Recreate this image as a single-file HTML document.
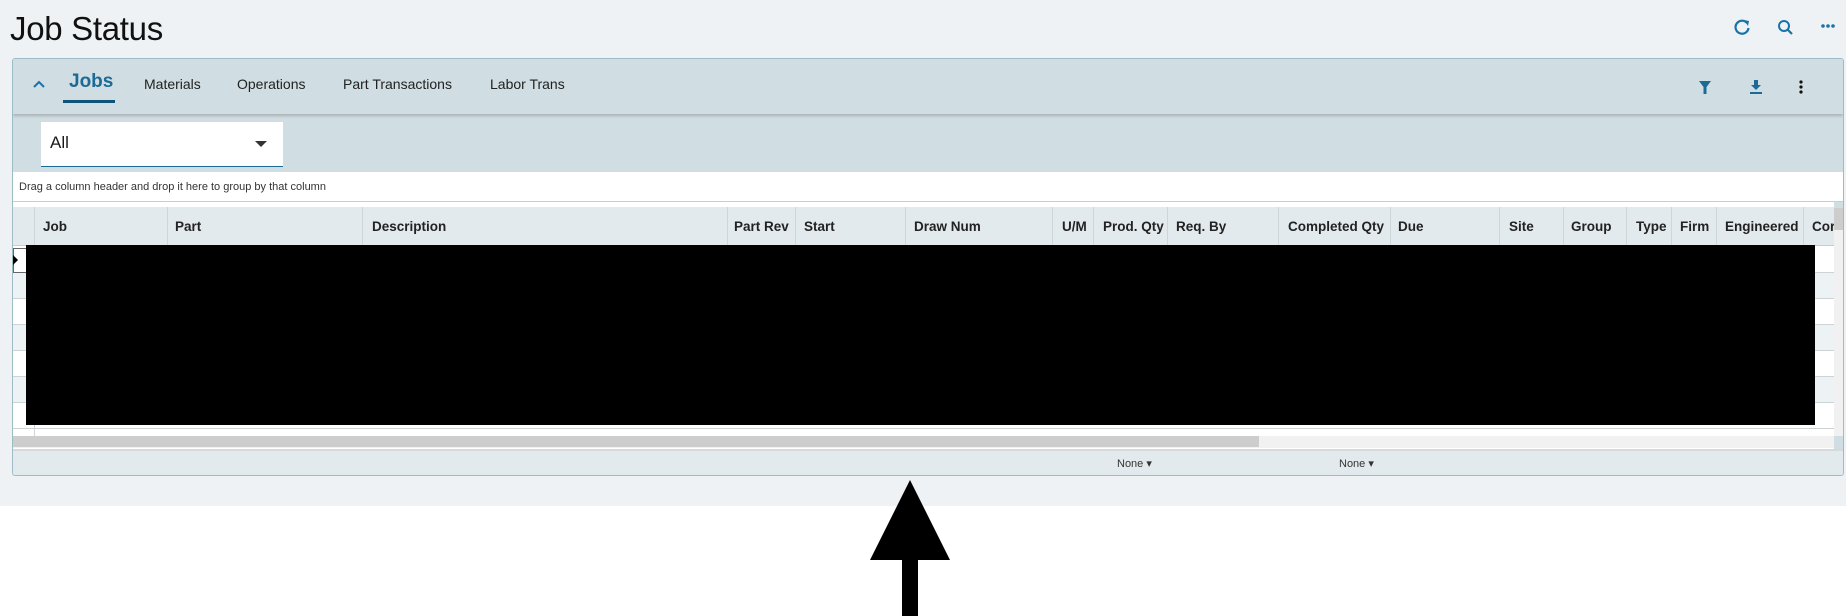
<!DOCTYPE html>
<html><head><meta charset="utf-8"><style>
*{box-sizing:border-box;margin:0;padding:0}
body{width:1846px;height:616px;background:#fff;position:relative;overflow:hidden;font-family:"Liberation Sans",sans-serif;color:#1a1a1a}
.bg{position:absolute;left:0;top:0;width:1846px;height:506px;background:#eef2f5}
.abs{position:absolute}
.title{left:10px;top:10px;font-size:33px;color:#111;letter-spacing:-0.3px}
.panel{left:12px;top:58px;width:1832px;height:418px;border:1px solid #9dbcc6;border-radius:3px;background:#d0dde2;overflow:hidden}
.tabbar{left:0;top:0;width:100%;height:55px;background:#d0dde2;box-shadow:0 2px 3px rgba(0,0,0,.2);z-index:2}
.tab{top:17px;font-size:14px;color:#222}
.filt{left:0;top:56px;width:100%;height:114px;background:#d0dde2}
.dd{left:28px;top:63px;width:242px;height:45px;background:#fff;border-bottom:1px solid #1a6b96}
.grp{left:0;top:113px;width:100%;height:30px;background:#fff;font-size:11px;color:#333;padding:9px 6px;border-bottom:1px solid #ccc}
.hdr{left:0;top:148px;width:1821px;height:39px;background:#e3eaed;border-bottom:1px solid #ccc}
.hc{top:12px;font-size:13.5px;font-weight:bold;color:#222;white-space:nowrap}
.vs{top:0;width:1px;height:39px;background:#cfd6d9}
.row{left:0;width:1821px;height:26px;border-bottom:1px solid #cdd3d5}
.foot{left:0;top:390px;width:100%;height:27px;background:#e3eaed;border-top:2px solid #d5d9db}
</style></head><body>
<div class="bg"></div>
<div class="abs title">Job Status</div>
<svg class="abs" style="left:1732px;top:17px" width="110" height="20" viewBox="0 0 110 20">
<path d="M15 6 A6.5 6.5 0 1 0 16.5 11" fill="none" stroke="#1a72a8" stroke-width="2.2"/><path d="M12 3 L17 4 L16 9 Z" fill="#1a72a8"/>
<circle cx="52" cy="9" r="5" fill="none" stroke="#1a72a8" stroke-width="2"/><path d="M55.5 12.5 L60 17" stroke="#1a72a8" stroke-width="2.2"/>
<circle cx="91" cy="9" r="1.8" fill="#1a72a8"/><circle cx="96" cy="9" r="1.8" fill="#1a72a8"/><circle cx="101" cy="9" r="1.8" fill="#1a72a8"/>
</svg>
<div class="abs panel">
 <div class="abs filt"></div>
 <div class="abs tabbar">
  <svg class="abs" style="left:19px;top:20px" width="14" height="10"><path d="M2 8 L7 3 L12 8" fill="none" stroke="#1a72a8" stroke-width="2"/></svg>
  <div class="abs tab" style="left:56px;top:12px;font-size:19px;font-weight:bold;color:#1a6b96">Jobs</div>
  <div class="abs" style="left:50px;top:41px;width:52px;height:3px;background:#0f5478"></div>
  <div class="abs tab" style="left:131px">Materials</div>
  <div class="abs tab" style="left:224px">Operations</div>
  <div class="abs tab" style="left:330px">Part Transactions</div>
  <div class="abs tab" style="left:477px">Labor Trans</div>
  <svg class="abs" style="left:1683px;top:18px" width="130" height="20">
   <path d="M3 4 L15 4 L10.5 10 L10.5 17 L7.5 17 L7.5 10 Z" fill="#1a6b96"/>
   <path d="M58 3 L62 3 L62 8 L65 8 L60 13 L55 8 L58 8 Z" fill="#1a6b96"/><rect x="54" y="15" width="12" height="2" fill="#1a6b96"/>
   <circle cx="105" cy="5" r="1.6" fill="#111"/><circle cx="105" cy="10" r="1.6" fill="#111"/><circle cx="105" cy="15" r="1.6" fill="#111"/>
  </svg>
 </div>
 <div class="abs dd"><span class="abs" style="left:9px;top:11px;font-size:17px">All</span>
  <svg class="abs" style="left:214px;top:19px" width="12" height="7"><path d="M0 0 L12 0 L6 6 Z" fill="#333"/></svg></div>
 <div class="abs grp">Drag a column header and drop it here to group by that column</div>
 <div class="abs" style="left:0;top:143px;width:1821px;height:248px;background:#fff"></div>
 <div class="abs hdr">
  <div class="abs vs" style="left:21px"></div><div class="abs vs" style="left:154px"></div><div class="abs vs" style="left:349px"></div><div class="abs vs" style="left:714px"></div><div class="abs vs" style="left:782px"></div><div class="abs vs" style="left:892px"></div><div class="abs vs" style="left:1039px"></div><div class="abs vs" style="left:1080px"></div><div class="abs vs" style="left:1154px"></div><div class="abs vs" style="left:1265px"></div><div class="abs vs" style="left:1377px"></div><div class="abs vs" style="left:1486px"></div><div class="abs vs" style="left:1550px"></div><div class="abs vs" style="left:1613px"></div><div class="abs vs" style="left:1658px"></div><div class="abs vs" style="left:1703px"></div><div class="abs vs" style="left:1790px"></div>
  <div class="abs hc" style="left:30px">Job</div><div class="abs hc" style="left:162px">Part</div><div class="abs hc" style="left:359px">Description</div><div class="abs hc" style="left:721px">Part Rev</div><div class="abs hc" style="left:791px">Start</div><div class="abs hc" style="left:901px">Draw Num</div><div class="abs hc" style="left:1049px">U/M</div><div class="abs hc" style="left:1090px">Prod. Qty</div><div class="abs hc" style="left:1163px">Req. By</div><div class="abs hc" style="left:1275px;width:112px;overflow:hidden">Completed Qty</div><div class="abs hc" style="left:1385px">Due</div><div class="abs hc" style="left:1496px">Site</div><div class="abs hc" style="left:1558px">Group</div><div class="abs hc" style="left:1623px">Type</div><div class="abs hc" style="left:1667px">Firm</div><div class="abs hc" style="left:1712px">Engineered</div><div class="abs hc" style="left:1799px;width:22px;overflow:hidden">Cor</div>
 </div>
 <div class="abs row" style="top:188px;background:#fff"></div>
 <div class="abs row" style="top:214px;background:#edf3f5"></div>
 <div class="abs row" style="top:240px;background:#fff"></div>
 <div class="abs row" style="top:266px;background:#edf3f5"></div>
 <div class="abs row" style="top:292px;background:#fff"></div>
 <div class="abs row" style="top:318px;background:#edf3f5"></div>
 <div class="abs row" style="top:344px;background:#fff"></div>
 <div class="abs" style="left:21px;top:188px;width:1px;height:190px;background:#cfd6d9"></div>
 <div class="abs" style="left:0;top:189px;width:14px;height:25px;border:1px solid #666;background:#fff"></div>
 <svg class="abs" style="left:0;top:196px" width="6" height="10"><path d="M0 0 L5 5 L0 10 Z" fill="#000"/></svg>
 <div class="abs" style="left:1821px;top:149px;width:11px;height:228px;background:#f1f1f1"></div>
 <div class="abs" style="left:1821px;top:149px;width:11px;height:22px;background:#cdcdcd"></div>
 <div class="abs" style="left:0;top:377px;width:1821px;height:12px;background:#f1f1f1"></div>
 <div class="abs" style="left:0;top:377px;width:1246px;height:11px;background:#cdcdcd"></div>
 <div class="abs foot">
  <span class="abs" style="left:1104px;top:6px;font-size:11px;color:#333">None ▾</span>
  <span class="abs" style="left:1326px;top:6px;font-size:11px;color:#333">None ▾</span>
 </div>
</div>
<div class="abs" style="left:26px;top:245px;width:1789px;height:180px;background:#000"></div>
<svg class="abs" style="left:860px;top:470px" width="100" height="146"><path d="M50 10 L90 90 L58 90 L58 146 L42 146 L42 90 L10 90 Z" fill="#000"/></svg>
</body></html>
